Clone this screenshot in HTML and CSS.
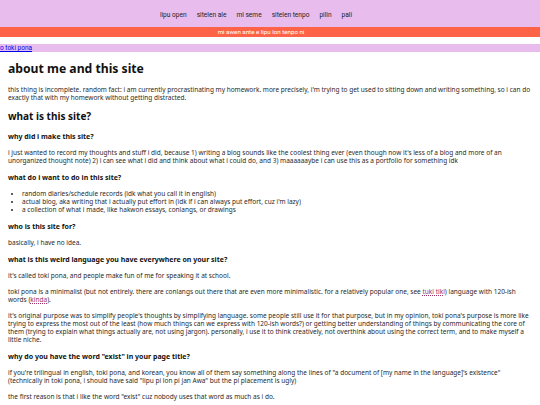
FILE: index.html
```html
<!DOCTYPE html>
<html>
<head>
<meta charset="utf-8">
<link rel="stylesheet" href="styles.css">
</head>
<body>
<nav class="topnav">
  <a href="#">lipu open</a>
  <a href="#">sitelen ale</a>
  <a href="#">mi seme</a>
  <a href="#">sitelen tenpo</a>
  <a href="#">pilin</a>
  <a href="#">pali</a>
</nav>
<div class="notice">mi awen ante e lipu lon tenpo ni</div>
<div class="langbar"><a href="#">o toki pona</a></div>
<main class="content">
  <h1>about me and this site</h1>
  <p>this thing is incomplete. random fact: i am currently procrastinating my homework. more precisely, i'm trying to get used to sitting down and writing something, so i can do exactly that with my homework without getting distracted.</p>
  <h2>what is this site?</h2>
  <h3>why did i make this site?</h3>
  <p>i just wanted to record my thoughts and stuff i did, because 1) writing a blog sounds like the coolest thing ever (even though now it's less of a blog and more of an unorganized thought note) 2) i can see what i did and think about what i could do, and 3) maaaaaaybe i can use this as a portfolio for something idk</p>
  <h3>what do i want to do in this site?</h3>
  <ul>
    <li>random diaries/schedule records (idk what you call it in english)</li>
    <li>actual blog, aka writing that i actually put effort in (idk if i can always put effort, cuz i'm lazy)</li>
    <li>a collection of what i made, like hakwon essays, conlangs, or drawings</li>
  </ul>
  <h3>who is this site for?</h3>
  <p>basically, i have no idea.</p>
  <h3>what is this weird language you have everywhere on your site?</h3>
  <p>it's called toki pona, and people make fun of me for speaking it at school.</p>
  <p>toki pona is a minimalist (but not entirely. there are conlangs out there that are even more minimalistic. for a relatively popular one, see <a class="dotted" href="#">tuki tiki</a>) language with 120-ish words (<a class="dotted" href="#">kinda</a>).</p>
  <p>it's original purpose was to simplify people's thoughts by simplifying language. some people still use it for that purpose, but in my opinion, toki pona's purpose is more like trying to express the most out of the least (how much things can we express with 120-ish words?) or getting better understanding of things by communicating the core of them (trying to explain what things actually are, not using jargon). personally, i use it to think creatively, not overthink about using the correct term, and to make myself a little niche.</p>
  <h3>why do you have the word "exist" in your page title?</h3>
  <p>if you're trilingual in english, toki pona, and korean, you know all of them say something along the lines of "a document of [my name in the language]'s existence" (technically in toki pona, i should have said "lipu pi lon pi jan Awa" but the pi placement is ugly)</p>
  <p>the first reason is that i like the word "exist" cuz nobody uses that word as much as i do.</p>
</main>
</body>
</html>
```
FILE: styles.css
```css
html, body {
  margin: 0;
  padding: 0;
  background: #ffffff;
}
body {
  font-family: "Noto Sans", "Open Sans", sans-serif;
  color: #2a2a2a;
}
.topnav {
  background: #e8bdee;
  height: 27px;
  display: flex;
  justify-content: center;
  align-items: center;
  gap: 10px;
  font-family: Roboto, sans-serif;
  font-size: 6.6px;
  padding: 3px 28px 0 0;
  box-sizing: border-box;
}
.topnav a {
  color: #222;
  text-decoration: none;
}
.notice {
  background: #ff6347;
  color: #fff;
  height: 10px;
  line-height: 10px;
  text-align: center;
  font-family: Roboto, sans-serif;
  font-size: 6.2px;
  padding-right: 18px;
}
.langbar {
  margin-top: 7px;
  background: #e8bdee;
  height: 8px;
  line-height: 8px;
  font-family: Roboto, sans-serif;
  font-size: 6.5px;
}
.langbar a {
  color: #0000ee;
}
.content {
  padding: 0 8px;
}
h1 {
  font-size: 12.2px;
  margin: 9px 0 9px;
  line-height: 16px;
  color: #111;
}
h2 {
  font-size: 10px;
  margin: 8px 0 10px;
  line-height: 12px;
  color: #111;
}
h3 {
  font-size: 7px;
  margin: 8px 0 8px;
  line-height: 9px;
  color: #111;
}
p, li {
  font-size: 6.5px;
  line-height: 8px;
}
p {
  margin: 0 0 8px;
}
ul {
  margin: 0 0 8px;
  padding-left: 14px;
}
a.dotted {
  color: #a0306a;
  text-decoration: underline dotted;
}
```
